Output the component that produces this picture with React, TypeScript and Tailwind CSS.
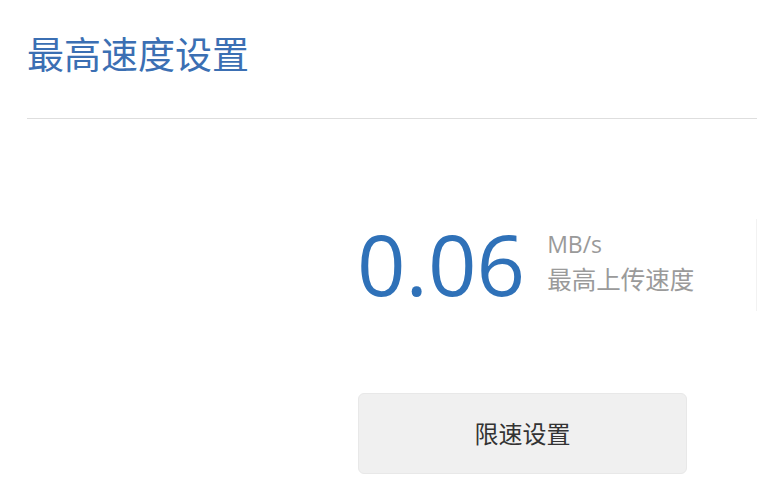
import React from 'react';

const font = { fontFamily: '"Open Sans", "Noto Sans CJK SC", sans-serif' };

export default function App() {
  return (
    <div className="w-[757px] h-[500px] bg-white overflow-hidden" style={font}>
      <div className="pl-[27px] pt-[30px]">
        <h1 className="text-[37px] leading-[50px] text-[#3b6fb3] font-normal">最高速度设置</h1>
        <div className="mt-[38px] h-px bg-[#dedede]" />
      </div>

      <div className="flex">
        <div className="ml-[358px] flex-1 flex flex-col">
          <div className="mt-[100px] flex items-start h-[92px] border-r border-[#f2f2f2]">
            <span className="-ml-[1px] mt-[4px] text-[85px] leading-[80px] text-[#2f71b8]">0.06</span>
            <div className="ml-[22px] mt-[10px] flex flex-col text-[#9a9a9a]">
              <span className="text-[23px] leading-[30px]">MB/s</span>
              <span className="text-[24.5px] leading-[42px]">最高上传速度</span>
            </div>
          </div>
          <button className="mt-[82px] w-[329px] h-[81px] rounded-[6px] bg-[#f0f0f0] border border-[#e8e8e8] text-[24px] text-[#333]">
            限速设置
          </button>
        </div>
      </div>
    </div>
  );
}
